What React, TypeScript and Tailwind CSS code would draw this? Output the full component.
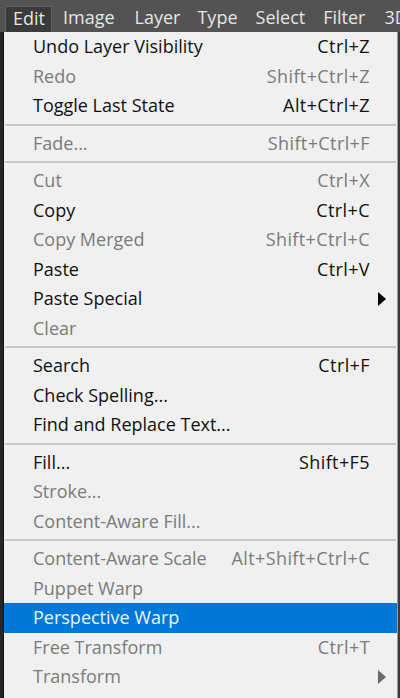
import React from "react";

type Item =
  | { sep: true }
  | { label: string; shortcut?: string; disabled?: boolean; sub?: boolean; active?: boolean; sep?: false };

const items: Item[] = [
  { label: "Undo Layer Visibility", shortcut: "Ctrl+Z" },
  { label: "Redo", shortcut: "Shift+Ctrl+Z", disabled: true },
  { label: "Toggle Last State", shortcut: "Alt+Ctrl+Z" },
  { sep: true },
  { label: "Fade...", shortcut: "Shift+Ctrl+F", disabled: true },
  { sep: true },
  { label: "Cut", shortcut: "Ctrl+X", disabled: true },
  { label: "Copy", shortcut: "Ctrl+C" },
  { label: "Copy Merged", shortcut: "Shift+Ctrl+C", disabled: true },
  { label: "Paste", shortcut: "Ctrl+V" },
  { label: "Paste Special", sub: true },
  { label: "Clear", disabled: true },
  { sep: true },
  { label: "Search", shortcut: "Ctrl+F" },
  { label: "Check Spelling..." },
  { label: "Find and Replace Text..." },
  { sep: true },
  { label: "Fill...", shortcut: "Shift+F5" },
  { label: "Stroke...", disabled: true },
  { label: "Content-Aware Fill...", disabled: true },
  { sep: true },
  { label: "Content-Aware Scale", shortcut: "Alt+Shift+Ctrl+C", disabled: true },
  { label: "Puppet Warp", disabled: true },
  { label: "Perspective Warp", active: true },
  { label: "Free Transform", shortcut: "Ctrl+T", disabled: true },
  { label: "Transform", sub: true, disabled: true },
];

const font = { fontFamily: '"Open Sans", "Noto Sans", sans-serif' };

function Arrow({ color }: { color: string }) {
  return (
    <svg width="8" height="14" viewBox="0 0 8 14" className="absolute right-[11px] top-1/2 -translate-y-1/2">
      <path d="M0 0 L8 7 L0 14 Z" fill={color} />
    </svg>
  );
}

export default function App() {
  return (
    <div className="w-[400px] h-[698px] overflow-hidden bg-[#2a2a2a] flex flex-col text-[18px]" style={font}>
      <div className="h-[32px] bg-[#535353] flex items-center text-[#e6e6e6] text-[18px] shrink-0 overflow-hidden whitespace-nowrap">
        <div className="shrink-0 ml-[5px] h-[26px] mt-[5px] pl-[7px] pr-[6px] pb-[1px] flex items-center bg-[#3a3a3a] border border-[#5f5f5f] border-b-0 rounded-t-[2px]">
          Edit
        </div>
        <span className="shrink-0 ml-[11px] pt-[3px]">Image</span>
        <span className="shrink-0 ml-[20px] pt-[3px]">Layer</span>
        <span className="shrink-0 ml-[17px] pt-[3px]">Type</span>
        <span className="shrink-0 ml-[18px] pt-[3px]">Select</span>
        <span className="shrink-0 ml-[18px] pt-[3px]">Filter</span>
        <span className="shrink-0 ml-[19px] pt-[3px]">3D</span>
      </div>
      <div className="flex flex-1">
        <div className="w-[4px] bg-[#262626] border-r border-[#111]" />
        <div className="w-[393px] bg-[#f0f0f0] flex flex-col">
          {items.map((it, i) =>
            it.sep ? (
              <div key={i} className="h-[8px] flex items-center px-[1px]">
                <div className="h-[2px] w-full bg-[#c9c9c9]" />
              </div>
            ) : (
              <div
                key={i}
                className={
                  "relative h-[29.5px] flex items-center pl-[29px] pr-[27px] " +
                  (it.active ? "bg-[#0078d7] text-[#eef4fa]" : it.disabled ? "text-[#7b7b7b]" : "text-[#101010]")
                }
              >
                <span className="flex-1 whitespace-nowrap">{it.label}</span>
                {it.shortcut && <span className="whitespace-nowrap tracking-[0.4px]">{it.shortcut}</span>}
                {it.sub && <Arrow color={it.disabled ? "#6a6a6a" : "#000"} />}
              </div>
            )
          )}
        </div>
        <div className="flex-1 bg-[#3c3c3c] border-l border-[#9a9a9a]" />
      </div>
    </div>
  );
}
